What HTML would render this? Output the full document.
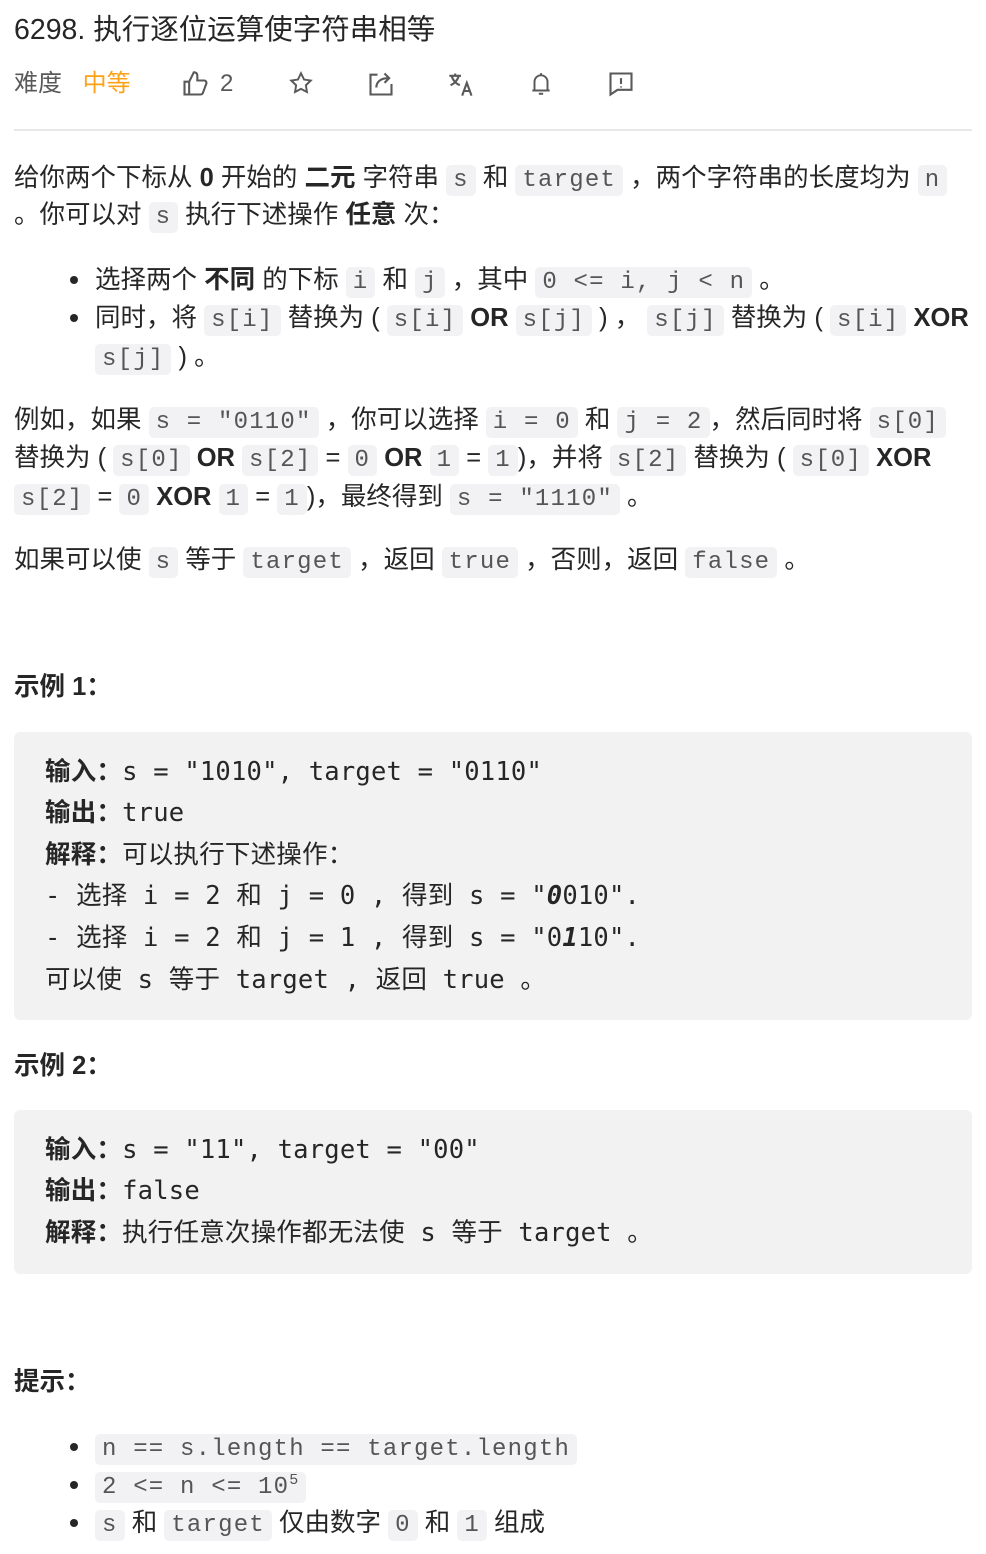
<!DOCTYPE html>
<html><head><meta charset="utf-8"><style>
body{margin:0;width:986px;height:1554px;background:#fff;position:relative;overflow:hidden;font-family:"Liberation Sans","Noto Sans CJK SC",sans-serif;color:#262626;}
.l{position:absolute;left:14px;height:38px;line-height:38px;font-size:25.5px;white-space:nowrap;}
code{font-family:"Liberation Mono",monospace;font-size:24px;letter-spacing:1.2px;background:#f2f2f4;color:#555;padding:2px 7px;border-radius:5px;}
b{font-weight:700;}
.dot{position:absolute;left:70px;width:8px;height:8px;border-radius:50%;background:#262626;}
.blk{position:absolute;left:14px;width:958px;background:#f2f2f3;border-radius:6px;}
.cl{position:absolute;left:45px;font-size:25.5px;white-space:nowrap;font-family:"DejaVu Sans Mono","Noto Sans CJK SC",monospace;height:40px;line-height:40px;color:#262626;letter-spacing:0.2px;}
.ic{position:absolute;top:70px;}
</style></head><body>
<div class="l" style="top:11px;font-size:28.5px;color:#262626">6298. 执行逐位运算使字符串相等</div>
<div class="l" style="top:65px;color:#595959;font-size:24px">难度 <span style="color:#ffa116;margin-left:14px">中等</span></div>
<svg class="ic" style="left:181px" width="28" height="28" viewBox="0 0 24 24" fill="none" stroke="#595959" stroke-width="1.8"><path d="M3 10h4v11H3zM7 10l4-8c2 0 3 1 3 3v4h6c1 0 2 1 1.8 2.5L19 19c-.3 1.2-1 2-2.2 2H7"/></svg>
<div class="l" style="top:65px;left:220px;color:#595959;font-size:24px">2</div>
<svg class="ic" style="left:288px" width="26" height="26" viewBox="0 0 24 24" fill="none" stroke="#595959" stroke-width="1.8"><path d="M12 3l2.8 5.8 6.2.9-4.5 4.4 1 6.2L12 17.4l-5.5 2.9 1-6.2L3 9.7l6.2-.9z"/></svg>
<svg class="ic" style="left:367px" width="28" height="28" viewBox="0 0 24 24" fill="none" stroke="#595959" stroke-width="1.8"><path d="M9 4H3v17h18v-9M8 15c0-5 4-8 10-8M15 3l4 4-4 4"/></svg>
<svg class="ic" style="left:447px" width="28" height="28" viewBox="0 0 24 24" fill="none" stroke="#595959" stroke-width="1.8"><path d="M2 5h10M7 3v2M4 5c1 4 4 7 7 8M10 5c-1 4-4 7-7 8M13 22l4-11 4 11M14.5 18h5"/></svg>
<svg class="ic" style="left:528px" width="26" height="28" viewBox="0 0 24 24" fill="none" stroke="#595959" stroke-width="1.8"><path d="M6 18V10a6 6 0 0112 0v8zM4 18h16M10 21h4M12 2v2"/></svg>
<svg class="ic" style="left:607px" width="28" height="28" viewBox="0 0 24 24" fill="none" stroke="#595959" stroke-width="1.8"><path d="M3 3h18v14H9l-6 4zM12 7v5M12 14v1"/></svg>
<div style="position:absolute;left:14px;top:129px;width:958px;height:2px;background:#e8e8e8"></div>

<div class="l" style="top:159px">给你两个下标从 <b>0</b> 开始的 <b>二元</b> 字符串 <code>s</code> 和 <code>target</code> ，两个字符串的长度均为 <code>n</code></div>
<div class="l" style="top:196px">。你可以对 <code>s</code> 执行下述操作 <b>任意</b> 次：</div>
<div class="dot" style="top:276px"></div>
<div class="l" style="top:261px;left:95px">选择两个 <b>不同</b> 的下标 <code>i</code> 和 <code>j</code> ，其中 <code>0 &lt;= i, j &lt; n</code> 。</div>
<div class="dot" style="top:314px"></div>
<div class="l" style="top:299px;left:95px">同时，将 <code>s[i]</code> 替换为 ( <code>s[i]</code> <b>OR</b> <code>s[j]</code> ) ， <code>s[j]</code> 替换为 ( <code>s[i]</code> <b>XOR</b></div>
<div class="l" style="top:338px;left:95px"><code>s[j]</code> ) 。</div>
<div class="l" style="top:401px">例如，如果 <code>s = "0110"</code> ，你可以选择 <code>i = 0</code> 和 <code>j = 2</code>，然后同时将 <code>s[0]</code></div>
<div class="l" style="top:439px">替换为 ( <code>s[0]</code> <b>OR</b> <code>s[2]</code> = <code>0</code> <b>OR</b> <code>1</code> = <code>1</code>)，并将 <code>s[2]</code> 替换为 ( <code>s[0]</code> <b>XOR</b></div>
<div class="l" style="top:478px"><code>s[2]</code> = <code>0</code> <b>XOR</b> <code>1</code> = <code>1</code>)，最终得到 <code>s = "1110"</code> 。</div>
<div class="l" style="top:541px">如果可以使 <code>s</code> 等于 <code>target</code> ，返回 <code>true</code> ，否则，返回 <code>false</code> 。</div>

<div class="l" style="top:668px;font-weight:700">示例 1：</div>
<div class="blk" style="top:732px;height:288px"></div>
<div class="cl" style="top:752px"><b>输入：</b>s = "1010", target = "0110"</div>
<div class="cl" style="top:793px"><b>输出：</b>true</div>
<div class="cl" style="top:835px"><b>解释：</b>可以执行下述操作：</div>
<div class="cl" style="top:876px">- 选择 i = 2 和 j = 0 , 得到 s = "<b><i>0</i></b>010".</div>
<div class="cl" style="top:918px">- 选择 i = 2 和 j = 1 , 得到 s = "0<b><i>1</i></b>10".</div>
<div class="cl" style="top:960px">可以使 s 等于 target , 返回 true 。</div>

<div class="l" style="top:1047px;font-weight:700">示例 2：</div>
<div class="blk" style="top:1110px;height:164px"></div>
<div class="cl" style="top:1130px"><b>输入：</b>s = "11", target = "00"</div>
<div class="cl" style="top:1171px"><b>输出：</b>false</div>
<div class="cl" style="top:1213px"><b>解释：</b>执行任意次操作都无法使 s 等于 target 。</div>

<div class="l" style="top:1363px;font-weight:700">提示：</div>
<div class="dot" style="top:1443px"></div>
<div class="l" style="top:1428px;left:95px"><code>n == s.length == target.length</code></div>
<div class="dot" style="top:1481px"></div>
<div class="l" style="top:1466px;left:95px"><code>2 &lt;= n &lt;= 10<sup style="font-size:15px;line-height:0">5</sup></code></div>
<div class="dot" style="top:1519px"></div>
<div class="l" style="top:1504px;left:95px"><code>s</code> 和 <code>target</code> 仅由数字 <code>0</code> 和 <code>1</code> 组成</div>
</body></html>
